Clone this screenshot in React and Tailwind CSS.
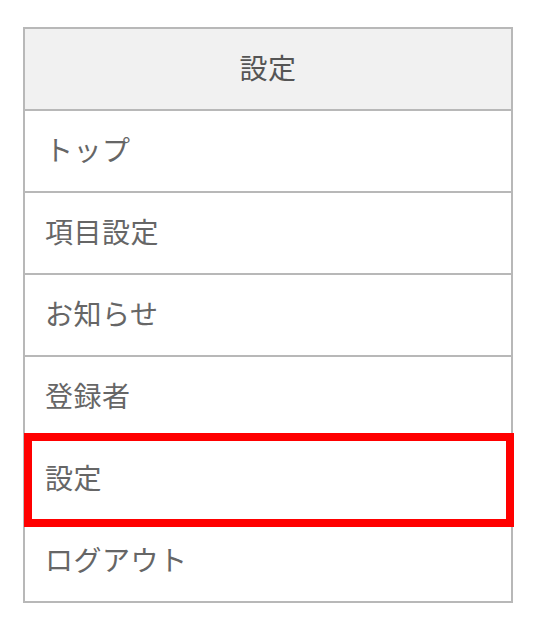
const items = ['トップ', '項目設定', 'お知らせ', '登録者', '設定', 'ログアウト'];

export default function App() {
  return (
    <div
      className="min-h-[632px] bg-white pt-[27px] pl-[23px]"
      style={{ fontFamily: '"Noto Sans CJK JP", "Noto Sans", sans-serif' }}
    >
      <div className="w-[490px] border-2 border-[#b8b8b8] text-[28px] tracking-[0.5px] text-[#666666]">
        {/* Header */}
        <div className="flex h-[82px] items-center justify-center border-b-2 border-[#b8b8b8] bg-[#f1f1f1] pb-[5px] text-[#555555]">
          設定
        </div>
        {items.map((item, i) => (
          <div
            key={item}
            className={
              'relative flex items-center pb-[5px] pl-[20px] ' +
              (i < items.length - 1 ? 'h-[82px] border-b-2 border-[#b8b8b8]' : 'h-[80px]')
            }
          >
            {item}
            {item === '設定' && (
              <div className="absolute top-[-6px] bottom-[-8px] left-[-1px] right-[-3px] border-8 border-[#ff0000]" />
            )}
          </div>
        ))}
      </div>
    </div>
  );
}
